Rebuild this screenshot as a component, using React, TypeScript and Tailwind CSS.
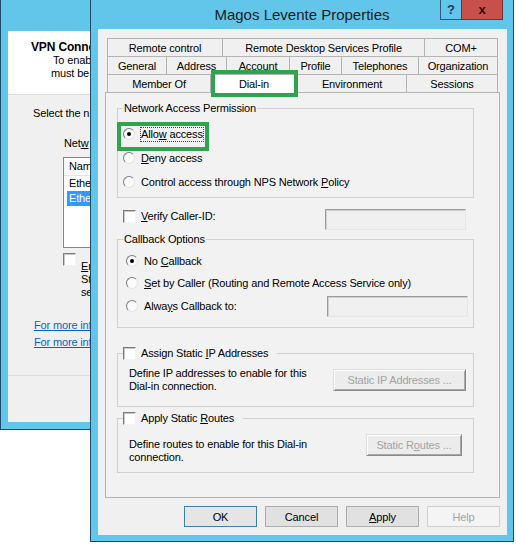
import React from 'react';

type Tab = { label: string; w: string; selected?: boolean };

const tabRows: Tab[][] = [
  [
    { label: 'Remote control', w: 'w-[115px]' },
    { label: 'Remote Desktop Services Profile', w: 'w-[202px]' },
    { label: 'COM+', w: 'w-[74px]' },
  ],
  [
    { label: 'General', w: 'w-[59px]' },
    { label: 'Address', w: 'w-[60px]' },
    { label: 'Account', w: 'w-[63px]' },
    { label: 'Profile', w: 'w-[52px]' },
    { label: 'Telephones', w: 'w-[77px]' },
    { label: 'Organization', w: 'w-[80px]' },
  ],
  [
    { label: 'Member Of', w: 'w-[103px]' },
    { label: 'Dial-in', w: 'w-[87px]', selected: true },
    { label: 'Environment', w: 'w-[109px]' },
    { label: 'Sessions', w: 'w-[92px]' },
  ],
];

function Radio({ checked }: { checked?: boolean }) {
  return (
    <span className="flex h-[12px] w-[12px] shrink-0 items-center justify-center rounded-full border border-t-[#7c7c7c] border-l-[#7c7c7c] border-r-[#e4e4e4] border-b-[#e4e4e4] bg-[#fbfbfb]">
      {checked && <span className="h-[4px] w-[4px] rounded-full bg-black" />}
    </span>
  );
}

function Check() {
  return (
    <span className="block h-[13px] w-[13px] shrink-0 border border-t-[#7c7c7c] border-l-[#7c7c7c] border-r-[#f4f4f4] border-b-[#f4f4f4] bg-white shadow-[inset_1px_1px_0_#c8c8c8]" />
  );
}

function Field({ w }: { w: string }) {
  return (
    <span
      className={`block h-[21px] ${w} shrink-0 border border-t-[#9a9a9a] border-l-[#9a9a9a] border-r-[#e6e6e6] border-b-[#e6e6e6] bg-[#f0f0f0] shadow-[inset_1px_1px_0_#d0d0d0]`}
    />
  );
}

function GreyButton({ children, w }: { children: React.ReactNode; w: string }) {
  return (
    <span
      className={`flex h-[22px] ${w} shrink-0 items-center justify-center border border-t-[#dedede] border-l-[#dedede] border-r-[#8a8a8a] border-b-[#8a8a8a] bg-[#ececec] text-[#a3a3a3] shadow-[inset_1px_1px_0_#fff,inset_-1px_-1px_0_#a8a8a8]`}
    >
      {children}
    </span>
  );
}

function BackWindow() {
  return (
    <div className="absolute left-0 top-0 flex h-[430px] w-[91px] flex-col overflow-hidden border-l border-b border-[#1d4a66] bg-[#62c6ea] pl-[7px] pt-[31px] pb-[7px]">
      <div className="flex flex-1 flex-col overflow-hidden bg-[#f0f0f0]">
        <div className="h-[64px] overflow-hidden border-b border-[#dcdcdc] bg-white pt-[9px]">
          <div className="pl-[23px] text-[12px] font-bold whitespace-nowrap">VPN Conne</div>
          <div className="pl-[45px] leading-[13px] whitespace-nowrap">To enab</div>
          <div className="pl-[43px] leading-[13px] whitespace-nowrap">must be</div>
        </div>
        <div className="pl-[25px] pt-[11px] whitespace-nowrap">Select the n</div>
        <div className="mt-[16px] pl-[56px] whitespace-nowrap">
          Net<u>w</u>
        </div>
        <div className="ml-[55px] mt-[7px] h-[91px] w-[60px] overflow-hidden border border-[#828790] bg-white">
          <div className="h-[18px] border-b border-[#e5e5e5] pl-[5px] leading-[17px]">Nam</div>
          <div className="h-[15px] pl-[5px] leading-[15px]">Ethe</div>
          <div className="ml-[3px] h-[15px] bg-[#3399ff] pl-[2px] leading-[15px] text-white">Ethe</div>
        </div>
        <div className="ml-[55px] mt-[5px] flex items-start">
          <Check />
          <div className="ml-[5px] pt-[7px] leading-[13px] whitespace-nowrap">
            <div>
              <u>E</u>n
            </div>
            <div>St</div>
            <div>se</div>
          </div>
        </div>
        <div className="mt-[18px] pl-[26px] leading-[17px] whitespace-nowrap text-[#0066cc]">
          <div className="underline">For more inf</div>
          <div className="underline">For more inf</div>
        </div>
        <div className="mt-[24px] border-t border-[#dcdcdc]" />
      </div>
    </div>
  );
}

function Tabs() {
  return (
    <div className="ml-[2px] flex w-[391px] flex-col">
      {tabRows.map((row, i) => (
        <div key={i} className="flex h-[18px] items-start">
          {row.map((t, j) => (
            <div
              key={t.label}
              className={`${t.w} relative flex items-center justify-center border-t border-l border-[#b4b4b4] whitespace-nowrap ${
                j === row.length - 1 ? 'border-r' : ''
              } ${t.selected ? 'z-10 h-[19px] bg-white' : 'h-[18px] bg-[#f0f0f0]'}`}
            >
              {t.label}
              {t.selected && (
                <span className="absolute -top-[5px] -bottom-[4px] left-0 right-[-1px] border-4 border-[#2fa44f]" />
              )}
            </div>
          ))}
        </div>
      ))}
    </div>
  );
}

function DialInPage() {
  return (
    <div className="flex h-[406px] flex-col border border-[#b4b4b4] bg-[#f2f2f2] pl-[11px] pr-[25px] pt-[8px]">
      <fieldset className="border border-[#d0d0d0] pb-[3px]">
        <legend className="ml-[5px] px-[1px]">Network Access Permission</legend>
        <div className="pt-[7px]">
          <div className="relative flex h-[24px] items-center gap-[6px] pl-[5px]">
            <Radio checked />
            <span className="outline outline-1 outline-dotted outline-[#444] leading-[13px]">
              Allo<u>w</u> access
            </span>
            <span className="absolute left-[-1px] top-0 h-[29px] w-[92px] border-4 border-[#2fa44f]" />
          </div>
          <div className="flex h-[24px] items-center gap-[6px] pl-[5px]">
            <Radio />
            <span>
              <u>D</u>eny access
            </span>
          </div>
          <div className="flex h-[24px] items-center gap-[6px] pl-[5px]">
            <Radio />
            <span>
              Control access through NPS Network <u>P</u>olicy
            </span>
          </div>
        </div>
      </fieldset>

      <div className="mt-[11px] flex h-[20px] items-start justify-between pl-[6px] pr-[8px]">
        <div className="flex h-[14px] items-center gap-[5px]">
          <Check />
          <span>
            <u>V</u>erify Caller-ID:
          </span>
        </div>
        <Field w="w-[141px]" />
      </div>

      <fieldset className="mt-[3px] border border-[#d0d0d0] pb-[9px]">
        <legend className="ml-[5px] px-[1px]">Callback Options</legend>
        <div className="pt-[4px]">
          <div className="flex h-[22px] items-center gap-[6px] pl-[8px]">
            <Radio checked />
            <span>
              No <u>C</u>allback
            </span>
          </div>
          <div className="flex h-[22px] items-center gap-[6px] pl-[8px]">
            <Radio />
            <span>
              <u>S</u>et by Caller (Routing and Remote Access Service only)
            </span>
          </div>
          <div className="flex h-[24px] items-center pl-[8px] pr-[5px]">
            <Radio />
            <span className="ml-[6px]">
              Alwa<u>y</u>s Callback to:
            </span>
            <span className="ml-auto">
              <Field w="w-[141px]" />
            </span>
          </div>
        </div>
      </fieldset>

      <fieldset className="mt-[18px] border border-[#d0d0d0]">
        <legend className="ml-[5px] pr-[9px]">
          <span className="flex items-center gap-[5px]">
            <Check />
            <span>
              Assign Static <u>I</u>P Addresses
            </span>
          </span>
        </legend>
        <div className="flex h-[46px] items-start justify-between pl-[11px] pr-[7px] pt-[7px]">
          <div className="leading-[13px]">
            <div>Define IP addresses to enable for this</div>
            <div>Dial-in connection.</div>
          </div>
          <span className="mt-[2px]">
            <GreyButton w="w-[133px]">Static IP Addresses ...</GreyButton>
          </span>
        </div>
      </fieldset>

      <fieldset className="mt-[4px] border border-[#d0d0d0]">
        <legend className="ml-[5px] pr-[9px]">
          <span className="flex items-center gap-[5px]">
            <Check />
            <span>
              Apply Static <u>R</u>outes
            </span>
          </span>
        </legend>
        <div className="flex h-[47px] items-start justify-between pl-[11px] pr-[11px] pt-[13px]">
          <div className="leading-[13px]">
            <div>Define routes to enable for this Dial-in</div>
            <div>connection.</div>
          </div>
          <span className="-mt-[4px]">
            <GreyButton w="w-[96px]">
              Static R<u>o</u>utes ...
            </GreyButton>
          </span>
        </div>
      </fieldset>
    </div>
  );
}

function MainWindow() {
  return (
    <div className="absolute left-[90px] top-0 flex h-[542px] w-[424px] flex-col border-l border-r border-b border-[#1d4a66] bg-[#62c6ea]">
      <div className="relative flex h-[29px] shrink-0 items-center justify-center text-[15px] tracking-normal text-[#1b1b1b]">
        Magos Levente Properties
        <div className="absolute right-[10px] top-0 flex h-[20px]">
          <div className="flex w-[21px] items-center justify-center border-l border-b border-[#2a5d7c] text-[13px] font-bold text-[#1d3b55]">
            ?
          </div>
          <div className="flex w-[42px] items-center justify-center border-l border-b border-r border-[#7a2e2a] bg-[#c7504a] text-[13px] font-bold text-[#2a1010]">
            x
          </div>
        </div>
      </div>
      <div className="mb-[6px] ml-[7px] mr-[6px] flex flex-1 flex-col bg-[#f0f0f0] px-[7px] pt-[9px]">
        <Tabs />
        <DialInPage />
        <div className="mt-[8px] flex justify-end gap-[8px]">
          <span className="flex h-[21px] w-[73px] items-center justify-center border border-[#3c7fb1] bg-[#e5e5e5]">OK</span>
          <span className="flex h-[21px] w-[73px] items-center justify-center border border-[#adadad] bg-[#e1e1e1]">Cancel</span>
          <span className="flex h-[21px] w-[73px] items-center justify-center border border-[#adadad] bg-[#e1e1e1]">
            <u>A</u>pply
          </span>
          <span className="flex h-[21px] w-[73px] items-center justify-center border border-[#cfcfcf] bg-[#f4f4f4] text-[#a3a3a3]">
            Help
          </span>
        </div>
      </div>
    </div>
  );
}

export default function App() {
  return (
    <div className="relative h-[545px] w-[516px] overflow-hidden bg-white font-['Liberation_Sans',Arial,sans-serif] text-[11px] leading-[14px] tracking-[-0.15px] text-black">
      <BackWindow />
      <MainWindow />
    </div>
  );
}
